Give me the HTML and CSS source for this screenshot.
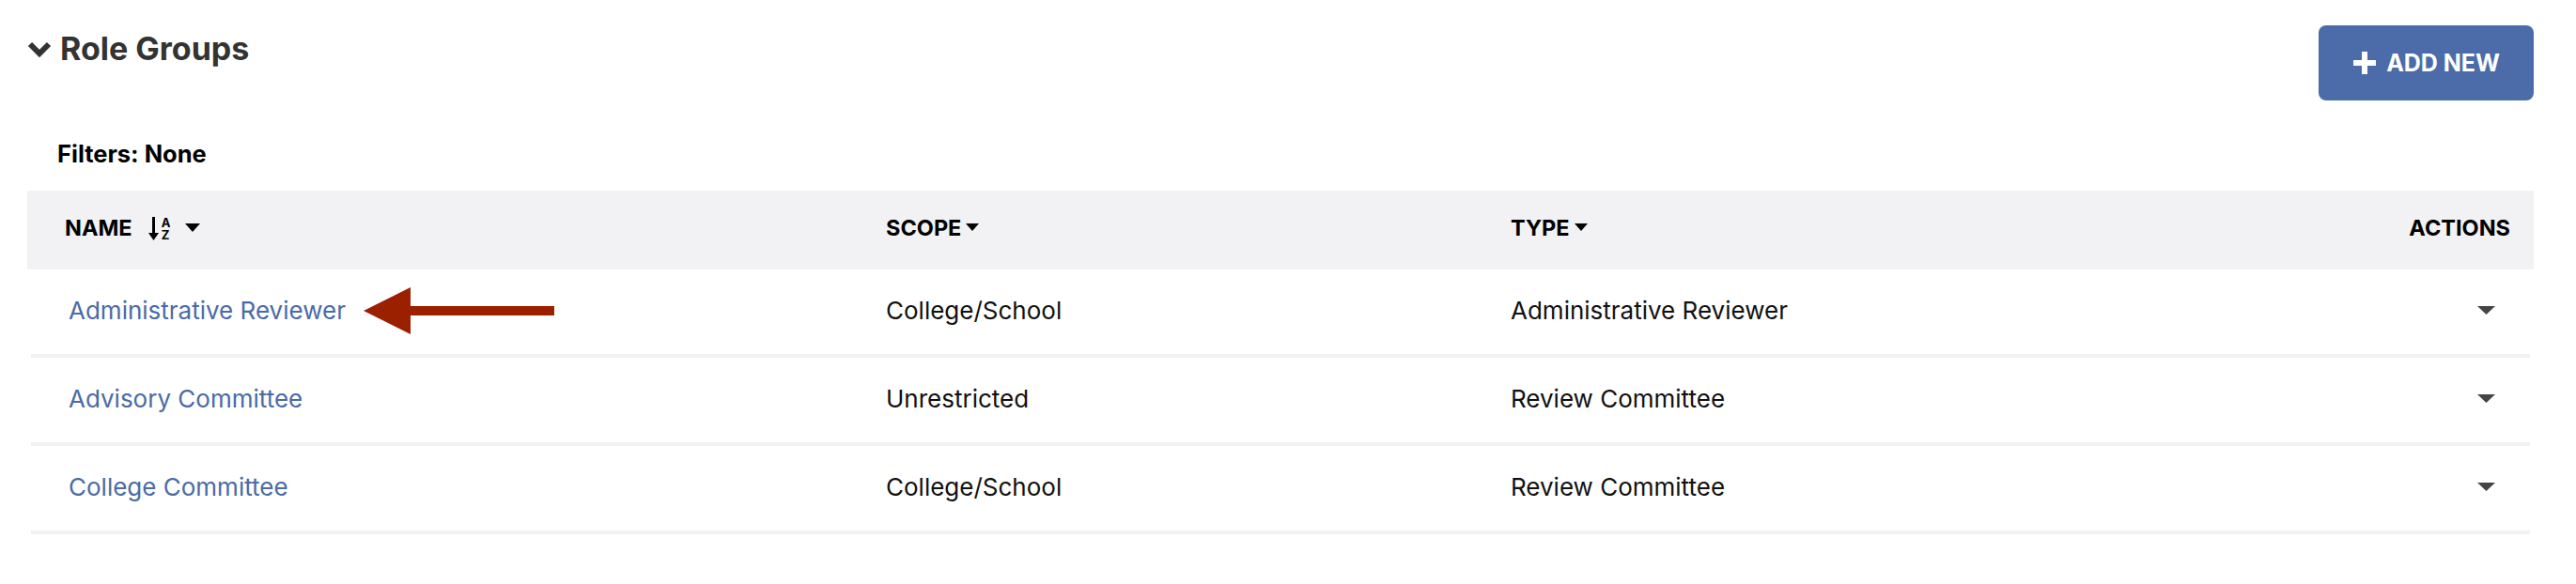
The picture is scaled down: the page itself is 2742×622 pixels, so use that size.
FILE: index.html
```html
<!DOCTYPE html>
<html lang="en">
<head>
    <meta charset="UTF-8">
    <meta name="viewport" content="width=device-width, initial-scale=1.0">
    <title>Role Groups</title>
    <link rel="stylesheet" href="styles.css">
</head>
<body>
    <div class="panel">
        <div class="panel-head">
            <h2 class="panel-title">
                <svg class="chevron" width="26" height="18" viewBox="0 0 26 18">
                    <path d="M3 3 L13 13 L23 3" fill="none" stroke="#333" stroke-width="6"/>
                </svg>
                Role Groups
            </h2>
            <button class="btn-add">
                <svg width="26" height="26" viewBox="0 0 26 26">
                    <path d="M13 1 V25 M1 13 H25" stroke="#fff" stroke-width="6"/>
                </svg>
                ADD NEW
            </button>
        </div>

        <p class="filters">Filters: None</p>

        <div class="grid">
            <div class="grid-head">
                <div class="cell">
                    NAME
                    <span class="sort-icon">
                        <svg width="11" height="27" viewBox="0 0 11 27">
                            <path d="M5.5 1 V22" stroke="#000" stroke-width="3"/>
                            <path d="M0 18 L5.5 26 L11 18 Z" fill="#000"/>
                        </svg>
                        <span class="sort-letters"><span>A</span><span>Z</span></span>
                    </span>
                    <svg class="caret" width="16" height="9" viewBox="0 0 16 9"><path d="M0 0 H16 L8 9 Z" fill="#000"/></svg>
                </div>
                <div class="cell">
                    SCOPE
                    <svg class="caret caret-sm" width="14" height="8" viewBox="0 0 14 8"><path d="M0 0 H14 L7 8 Z" fill="#000"/></svg>
                </div>
                <div class="cell">
                    TYPE
                    <svg class="caret caret-sm" width="14" height="8" viewBox="0 0 14 8"><path d="M0 0 H14 L7 8 Z" fill="#000"/></svg>
                </div>
                <div class="cell cell-actions">ACTIONS</div>
            </div>

            <div class="grid-row first-row">
                <div class="cell"><a href="#">Administrative Reviewer</a></div>
                <div class="cell">College/School</div>
                <div class="cell">Administrative Reviewer</div>
                <div class="cell cell-actions">
                    <svg width="19" height="9" viewBox="0 0 19 9"><path d="M0 0 H19 L9.5 9 Z" fill="#444"/></svg>
                </div>
                <!-- pointer drawn over the first row -->
                <svg class="pointer" width="204" height="50" viewBox="0 0 204 50">
                    <path d="M0 25 L50 0 V20 H203 V30 H50 V50 Z" fill="#9b2000"/>
                </svg>
            </div>
            <div class="grid-row">
                <div class="cell"><a href="#">Advisory Committee</a></div>
                <div class="cell">Unrestricted</div>
                <div class="cell">Review Committee</div>
                <div class="cell cell-actions">
                    <svg width="19" height="9" viewBox="0 0 19 9"><path d="M0 0 H19 L9.5 9 Z" fill="#444"/></svg>
                </div>
            </div>
            <div class="grid-row">
                <div class="cell"><a href="#">College Committee</a></div>
                <div class="cell">College/School</div>
                <div class="cell">Review Committee</div>
                <div class="cell cell-actions">
                    <svg width="19" height="9" viewBox="0 0 19 9"><path d="M0 0 H19 L9.5 9 Z" fill="#444"/></svg>
                </div>
            </div>
        </div>
    </div>
</body>
</html>
```

FILE: styles.css
```css
body {
    margin: 0;
    font-family: Inter, "Noto Sans", sans-serif;
    background: #fff;
    color: #111;
}

.panel {
    padding: 0 45px 0 29px;
}

.panel-head {
    display: flex;
    justify-content: space-between;
    align-items: flex-start;
    padding-top: 27px;
}

.panel-title {
    margin: 0;
    display: flex;
    align-items: center;
    gap: 9px;
    font-size: 34px;
    line-height: 50px;
    font-weight: 700;
    color: #333;
}

.chevron {
    margin-top: 1px;
}

.btn-add {
    display: flex;
    align-items: center;
    gap: 10px;
    height: 80px;
    padding: 0 36px;
    background-color: #4b6ca8;
    color: #fff;
    border: none;
    border-radius: 8px;
    font-family: Inter, sans-serif;
    font-size: 25px;
    font-weight: 700;
    cursor: pointer;
}

.filters {
    margin: 41px 0 23px 32px;
    font-size: 25.5px;
    line-height: 32px;
    font-weight: 700;
    color: #000;
}

.grid-head,
.grid-row {
    display: grid;
    align-items: center;
}

.grid-head {
    grid-template-columns: 874px 665px 1fr 200px;
    height: 84px;
    padding-bottom: 6px;
    box-sizing: border-box;
    background-color: #f2f2f4;
    font-size: 23.5px;
    font-weight: 700;
    color: #000;
}

.grid-row {
    grid-template-columns: 870px 665px 1fr 196px;
    margin: 0 4px;
    height: 94px;
    padding-bottom: 4px;
    box-sizing: border-box;
    border-bottom: 4px solid #f2f2f4;
    font-size: 26px;
}

.cell {
    padding-left: 40px;
    display: flex;
    align-items: center;
}

.grid-head .cell-actions {
    justify-content: flex-end;
    padding-right: 25px;
}

.grid-row .cell-actions {
    justify-content: flex-end;
    padding-right: 37px;
}

.grid-row a {
    color: #4a6aa8;
    text-decoration: none;
}

.sort-icon {
    display: inline-flex;
    align-items: center;
    gap: 3px;
    margin-left: 17px;
    margin-top: 3px;
}

.sort-letters {
    display: flex;
    flex-direction: column;
    font-size: 13px;
    line-height: 13px;
    font-weight: 700;
}

.caret {
    margin-left: 16px;
}

.caret-sm {
    margin-left: 5px;
}

.first-row {
    position: relative;
}

.pointer {
    position: absolute;
    left: 354px;
    top: 19px;
}
```
